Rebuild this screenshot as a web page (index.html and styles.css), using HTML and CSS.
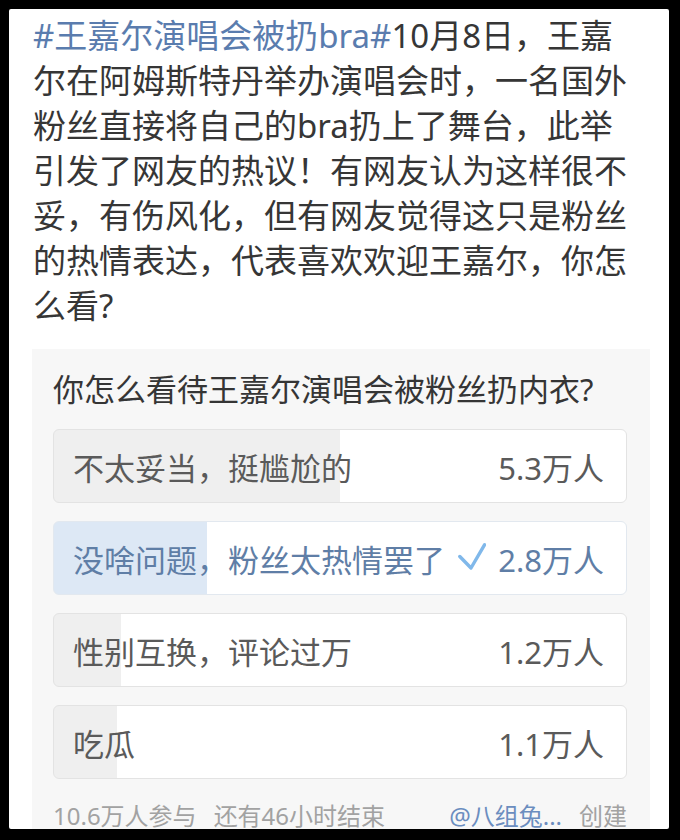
FILE: index.html
```html
<!DOCTYPE html>
<html lang="zh-CN">
<head>
<meta charset="utf-8">
<title>投票</title>
<link rel="stylesheet" href="styles.css">
</head>
<body>
<div class="screen">
  <p class="post"><span class="tag">#王嘉尔演唱会被扔bra#</span>10月8日，王嘉<br>尔在阿姆斯特丹举办演唱会时，一名国外<br>粉丝直接将自己的bra扔上了舞台，此举<br>引发了网友的热议！有网友认为这样很不<br>妥，有伤风化，但有网友觉得这只是粉丝<br>的热情表达，代表喜欢欢迎王嘉尔，你怎<br>么看?</p>
  <section class="poll">
    <h2 class="question">你怎么看待王嘉尔演唱会被粉丝扔内衣?</h2>
    <div class="options">
      <div class="option" style="--p:50%"><span class="label">不太妥当，挺尴尬的</span><span class="count">5.3万人</span></div>
      <div class="option chosen" style="--p:26.8%"><span class="label">没啥问题，粉丝太热情罢了</span><span class="count"><svg class="check" width="28" height="27" viewBox="0 0 28 27"><path d="M1.8 13.5 L13 25 L26.5 1.8" fill="none" stroke="#80b8ea" stroke-width="3.4" stroke-linecap="round" stroke-linejoin="round"/></svg>2.8万人</span></div>
      <div class="option" style="--p:11.8%"><span class="label">性别互换，评论过万</span><span class="count">1.2万人</span></div>
      <div class="option" style="--p:11%"><span class="label">吃瓜</span><span class="count">1.1万人</span></div>
    </div>
    <div class="footer">
      <div class="meta"><span>10.6万人参与</span><span>还有46小时结束</span></div>
      <div class="meta"><span class="author">@八组兔...</span><span>创建</span></div>
    </div>
  </section>
</div>
</body>
</html>
```
FILE: styles.css
```css
html, body {
  margin: 0;
  padding: 0;
  background: #000;
}
body {
  width: 680px;
  height: 840px;
  overflow: hidden;
  font-family: "Noto Sans", "Noto Sans CJK SC", sans-serif;
}
.screen {
  margin: 9px 11px 0 9px;
  height: 820px;
  background: #fff;
  border-radius: 2px;
  overflow: hidden;
  padding-top: 4px;
  box-sizing: border-box;
}
.post {
  margin: 0;
  padding: 0 6px 0 24px;
  font-size: 33px;
  line-height: 45px;
  color: #363636;
  white-space: nowrap;
}
.tag {
  color: #5a7cae;
}
.poll {
  margin: 21px 19px 0 23px;
  background: #f7f7f7;
  padding: 20px 23px 40px 21px;
}
.question {
  margin: 0;
  font-size: 31px;
  line-height: 40px;
  font-weight: normal;
  color: #353535;
  white-space: nowrap;
}
.options {
  margin-top: 20px;
  display: flex;
  flex-direction: column;
  gap: 18px;
}
.option {
  height: 74px;
  box-sizing: border-box;
  border: 1px solid #e3e3e3;
  border-radius: 6px;
  background: linear-gradient(to right, #efefef var(--p), #fff var(--p));
  display: flex;
  align-items: center;
  justify-content: space-between;
  padding: 0 22px 0 19px;
  font-size: 31px;
  color: #5a5a5a;
  white-space: nowrap;
}
.option.chosen {
  border-color: #e2e8ef;
  background: linear-gradient(to right, #dde8f5 var(--p), #fff var(--p));
  color: #5f7ea6;
}
.count {
  display: flex;
  align-items: center;
}
.check {
  margin-right: 12px;
  margin-top: -3px;
}
.footer {
  margin-top: 25px;
  display: flex;
  justify-content: space-between;
  font-size: 24px;
  line-height: 24px;
  color: #a2a2a2;
  white-space: nowrap;
}
.meta {
  display: flex;
  gap: 17px;
}
.author {
  color: #6b8dbf;
}
```
